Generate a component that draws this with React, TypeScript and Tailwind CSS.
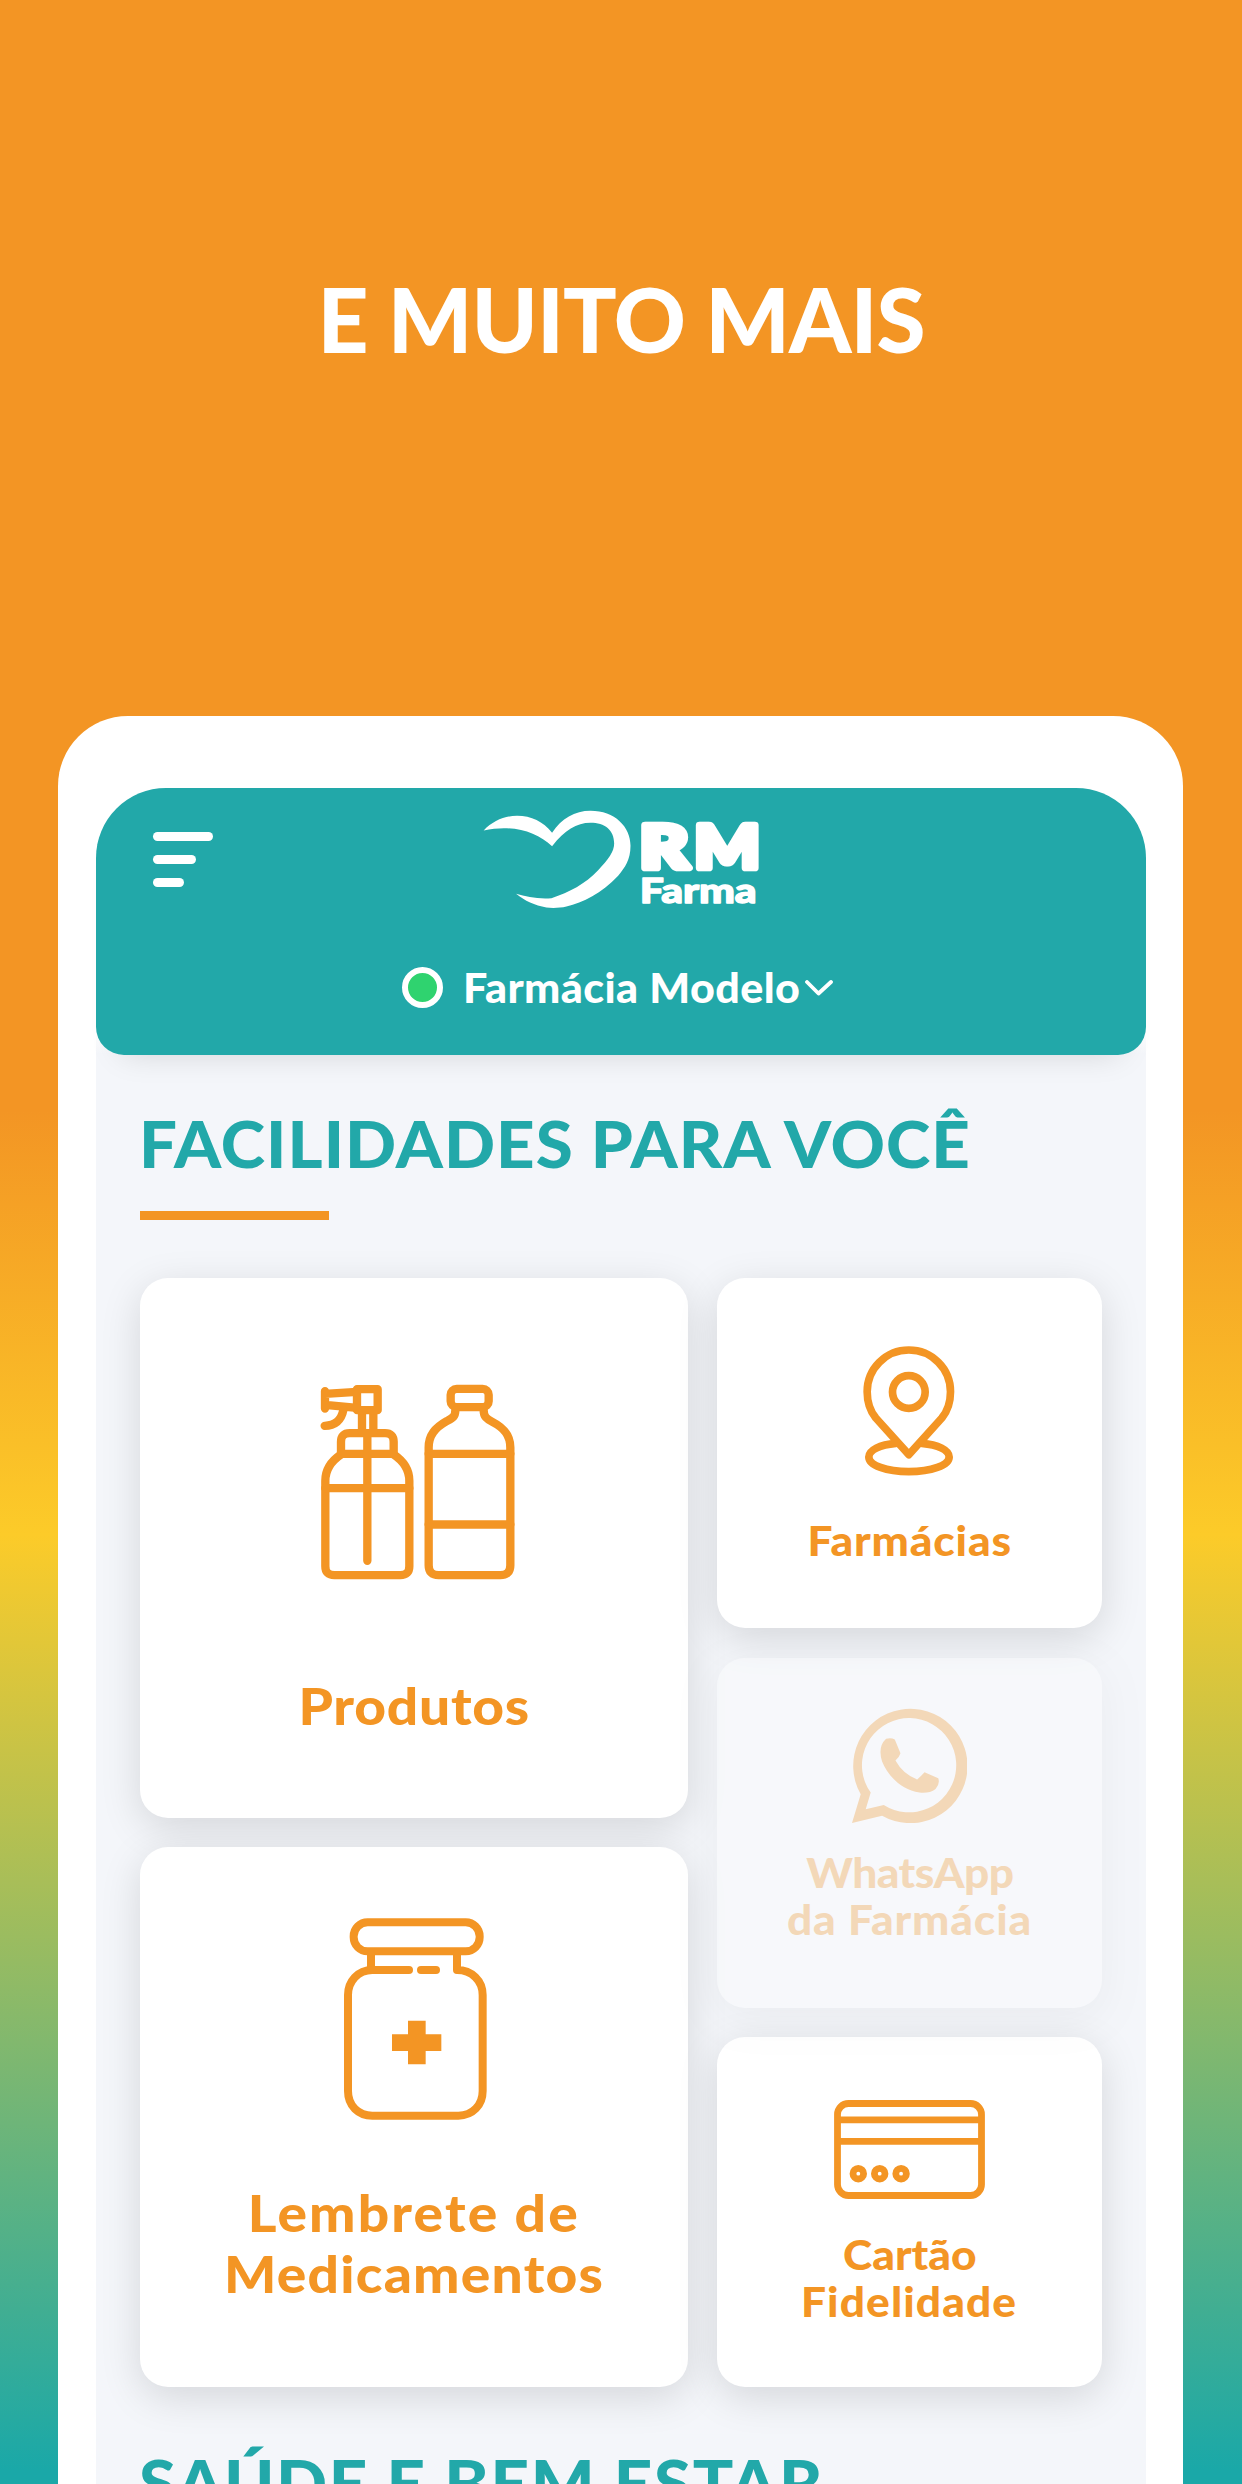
import type { ReactNode } from "react";
import clsx from "clsx";

function Logo() {
  return (
    <svg viewBox="310 90 830 296" className="w-[277px] h-[99px]" fill="#fff">
      <path d="M312 151C340 122 375 107 412 107C455 107 490 124 517 158C545 115 585 92 632 92C705 92 752 140 752 197C752 240 735 262 715 287C665 340 610 368 560 379C540 384 515 384 500 382C465 376 435 362 409 341C440 350 475 357 515 354C570 335 615 312 655 270C685 238 703 215 703 190C703 150 675 128 632 128C590 128 555 150 517 198C470 155 400 132 312 151Z" />
      <g
        stroke="#fff"
        strokeLinejoin="round"
        strokeLinecap="round"
        fontFamily="Lato, sans-serif"
        fontWeight="900"
      >
        <text x="780" y="264" fontSize="178" strokeWidth="20" textLength="146" lengthAdjust="spacingAndGlyphs">R</text>
        <text x="944" y="264" fontSize="178" strokeWidth="20" textLength="196" lengthAdjust="spacingAndGlyphs">M</text>
        <text x="780" y="369" fontSize="100" strokeWidth="4" textLength="350" lengthAdjust="spacingAndGlyphs">Farma</text>
      </g>
    </svg>
  );
}

function ProdutosIcon() {
  return (
    <svg viewBox="120 72 585 587" className="w-[195px] h-[196px] ml-[7px]" fill="none" stroke="currentColor" strokeWidth="25" strokeLinecap="round" strokeLinejoin="round">
      <path d="M183 283C150 305 136 335 136 362V618Q136 645 163 645H361Q388 645 388 618V362C388 335 374 305 341 283" />
      <path d="M183 281V245Q183 219 209 219H315Q341 219 341 245V281Z" />
      <path d="M136 384H388M262 219V602M246 155V215M280 155V215" />
      <path d="M231 87H293V150H231Z" />
      <path d="M135 93V145M135 101L231 95M135 134L231 143" />
      <path d="M190 150C184 180 165 197 134 197" />
      <rect x="512" y="86" width="114" height="55" rx="18" />
      <path d="M526 150C526 170 517 174 500 183C465 203 446 225 446 262V615Q446 645 476 645H661Q691 645 691 615V262C691 225 672 203 637 185C620 176 611 170 611 150" />
      <path d="M446 281H691M446 493H691" />
    </svg>
  );
}

function LembreteIcon() {
  return (
    <svg viewBox="432 114 429 606" className="w-[143px] h-[202px] ml-[2px]" fill="none" stroke="currentColor" strokeWidth="24" strokeLinecap="round" strokeLinejoin="round">
      <rect x="461" y="127" width="378" height="87" rx="42" />
      <path d="M513 220V270" />
      <path d="M627 270H517C473 270 444 305 444 345V633C444 677 475 707 517 707H775C818 707 848 675 848 633V345C848 302 815 270 771 270V220" />
      <path d="M663 270H708" />
      <path d="M624 422H677V463H724V513H677V553H624V513H576V463H624Z" fill="currentColor" stroke="none" />
    </svg>
  );
}

function PinIcon() {
  return (
    <svg viewBox="490 257 275 390" className="w-[92px] h-[130px] mr-[2px]" fill="none" stroke="currentColor" strokeWidth="23" strokeLinecap="round" strokeLinejoin="round">
      <path d="M627 583L528 473C511 452 502 425 502 394A125 125 0 0 1 752 394C752 425 743 452 726 473Z" />
      <circle cx="627" cy="395" r="49" />
      <path d="M588 549C540 553 507 570 507 590C507 615 560 634 627 634S748 615 748 590C748 570 715 553 666 549" />
    </svg>
  );
}

function WhatsAppIcon() {
  return (
    <svg viewBox="458 206 344 344" className="w-[115px] h-[115px]" fill="currentColor">
      <path fillRule="evenodd" d="M458 550L484 464A171 171 0 1 1 548 528ZM499 509L514 459A141 141 0 1 1 553 496Z" />
      <path d="M560 298Q575 294 586 300L603 341Q600 352 588 363Q610 403 653 420Q664 410 675 398L716 416Q722 432 708 448Q690 462 660 459C600 450 562 402 548 366Q534 322 560 298Z" />
    </svg>
  );
}

function CartaoIcon() {
  return (
    <svg viewBox="0 0 151 99" className="w-[151px] h-[99px]" fill="none" stroke="currentColor" strokeWidth="6.8">
      <rect x="3.5" y="3.5" width="144" height="92" rx="11" />
      <path d="M3 19.8H147M3 41.4H147" />
      <circle cx="24.3" cy="73.7" r="5.3" />
      <circle cx="45.7" cy="73.7" r="5.3" />
      <circle cx="67.1" cy="73.7" r="5.3" />
    </svg>
  );
}

function Card({ className, children }: { className: string; children: ReactNode }) {
  return (
    <div
      className={clsx(
        "flex flex-col items-center rounded-[28px] bg-white text-center font-black text-[#f39524] shadow-[0_10px_40px_rgba(0,0,0,0.13)]",
        className
      )}
    >
      {children}
    </div>
  );
}

// Lato is narrower than the brand face, so labels are widened a little
function Label({ className, children }: { className?: string; children: ReactNode }) {
  return <p className={clsx("scale-x-[1.08] whitespace-nowrap", className)}>{children}</p>;
}

function SectionTitle({ className, children }: { className: string; children: ReactNode }) {
  return (
    <h2
      className={clsx(
        "-ml-px origin-left scale-x-[1.05] whitespace-nowrap text-[64px] leading-[64px] font-black text-[#22a8a9]",
        className
      )}
    >
      {children}
    </h2>
  );
}

export default function App() {
  return (
    <div className="h-[2484px] w-[1242px] overflow-hidden bg-[linear-gradient(180deg,#f39524_0px,#f39524_1110px,#fccb29_1535px,#1aa8a8_2470px)] font-['Lato',sans-serif]">
      <h1 className="h-[716px] pt-[274px] text-center text-[89px] leading-[90px] font-black tracking-[-0.97px] text-white">
        E MUITO MAIS
      </h1>

      <div className="ml-[58px] h-[1800px] w-[1125px] rounded-t-[70px] bg-white px-[38px] pt-[72px]">
        <div className="h-full w-[1050px] rounded-t-[70px] bg-[linear-gradient(180deg,#fff_0px,#fff_240px,#f4f6fa_266px)]">
          <header className="h-[267px] rounded-t-[70px] rounded-b-[28px] bg-[#22a8a9] pt-[22px] text-white shadow-[0_24px_32px_-26px_rgba(0,0,0,0.15)]">
            <div className="grid grid-cols-[1fr_auto_1fr]">
              <div className="flex flex-col gap-[14px] pt-[22px] pl-[57px]">
                <span className="h-[9px] w-[60px] rounded-full bg-white" />
                <span className="h-[9px] w-[43px] rounded-full bg-white" />
                <span className="h-[9px] w-[31px] rounded-full bg-white" />
              </div>
              <Logo />
            </div>
            <div className="mt-[55px] flex items-center justify-center pr-[7px]">
              <span className="h-[41px] w-[41px] rounded-full border-[6px] border-white bg-[#2fd36f]" />
              <span className="ml-[20px] origin-left scale-x-[1.05] text-[41px] leading-[47px] font-black tracking-[0.4px]">
                Farmácia Modelo
              </span>
              <svg viewBox="0 0 28 16" className="ml-[21.5px] h-[16px] w-[28px]" fill="none" stroke="#fff" strokeWidth="3.8" strokeLinecap="round" strokeLinejoin="round">
                <path d="M2 2L13.5 13.5L26 2" />
              </svg>
            </div>
          </header>

          <main className="px-[44px] pt-[57px]">
            <SectionTitle className="tracking-[1px]">FACILIDADES PARA VOCÊ</SectionTitle>
            <div className="mt-[35px] h-[9px] w-[189px] bg-[#f39524]" />

            <div className="mt-[58px] flex gap-[29px]">
              <div className="flex w-[548px] flex-col gap-[29.5px]">
                <Card className="h-[539.5px] pt-[106px] text-[51px] leading-[61px]">
                  <ProdutosIcon />
                  <Label className="mt-[95px] tracking-[0.7px]">Produtos</Label>
                </Card>
                <Card className="h-[539.5px] pt-[71px] text-[51px] leading-[61px]">
                  <LembreteIcon />
                  <Label className="mt-[62px] tracking-[2px]">Lembrete de</Label>
                  <Label className="tracking-[1.15px]">Medicamentos</Label>
                </Card>
              </div>

              <div className="flex w-[385px] flex-col gap-[29.5px] text-[41px] leading-[47px]">
                <Card className="h-[350px] pt-[68px]">
                  <PinIcon />
                  <Label className="mt-[41px] tracking-[0.8px]">Farmácias</Label>
                </Card>
                <Card className="h-[350px] pt-[50.5px] opacity-30">
                  <WhatsAppIcon />
                  <Label className="mt-[26px] tracking-[-0.5px]">WhatsApp</Label>
                  <Label className="tracking-[0.8px]">da Farmácia</Label>
                </Card>
                <Card className="h-[350px] pt-[63px]">
                  <CartaoIcon />
                  <Label className="mt-[32px]">Cartão</Label>
                  <Label className="tracking-[1px]">Fidelidade</Label>
                </Card>
              </div>
            </div>

            <SectionTitle className="mt-[64px] tracking-[1.55px]">SAÚDE E BEM ESTAR</SectionTitle>
          </main>
        </div>
      </div>
    </div>
  );
}
